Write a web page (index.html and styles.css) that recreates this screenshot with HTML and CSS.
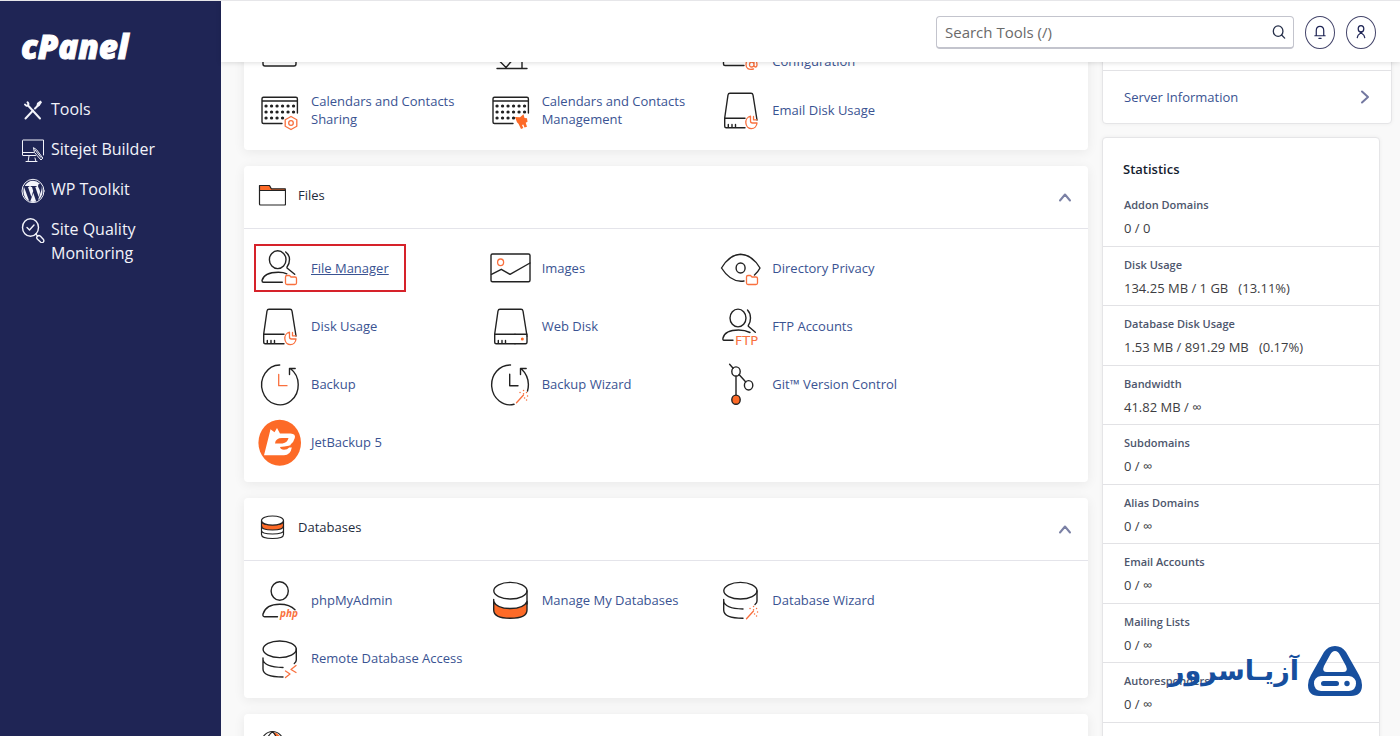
FILE: index.html
```html
<!DOCTYPE html>
<html lang="en">
<head>
<meta charset="utf-8">
<meta name="viewport" content="width=device-width, initial-scale=1">
<title>cPanel - Tools</title>
<link rel="stylesheet" href="styles.css">
</head>
<body>
<svg class="defs" width="0" height="0" aria-hidden="true">
  <defs>
    <g id="folder-badge"><path class="o" d="M28.500 39V33q0-1.500 1.500-1.500h2.500l1.500 1.500h4q1.500 0 1.500 1.500V39q0 1.500-1.500 1.500H30q-1.500 0-1.500-1.500z"/></g>
    <g id="pie-badge"><path class="o" d="M32.500 30.200A5.600 6.300 0 1 0 39 37h-4.500q-2 0-2-2z M35.500 30.500v3.300h3.300"/></g>
    <g id="wand-badge"><path class="o" d="M28.500 42.700l7-7.700"/><path class="o dots" d="M32 32.500h.1M35.500 30.500h.1M38.500 32.500h.1M35.500 33.700h.1M39.500 36h.1M36.500 38h.1M38.500 40h.1"/></g>
    <g id="drive"><path d="M27 41.700H8.200q-1.500 0-1.500-1.500V32L10 9q.3-1.700 2-1.700h21q1.700 0 2 1.700l4 25M6.700 32.300H27M10.300 38.500v3M14 38.500v3M17.500 38.500v3"/></g>
    <g id="calendar"><path d="M25 37.500H6.500q-1.500 0-1.500-1.500V12.800q0-1.500 1.500-1.500h32.400q1.500 0 1.500 1.500V27M5 15h35.400"/><path class="cal" d="M9 20h.1M14.500 20h.1M20 20h.1M25.500 20h.1M31 20h.1M36.500 20h.1M9 26h.1M14.500 26h.1M20 26h.1M25.500 26h.1M31 26h.1M36.500 26h.1M9 32h.1M14.500 32h.1M20 32h.1M25.500 32h.1"/></g>
  </defs>
</svg>
<div class="app">
  <aside class="sidebar">
    <a class="brand" href="#">cPanel</a>
    <nav class="nav" aria-label="Main">
      <a href="#"><svg viewBox="0 0 24 26" aria-hidden="true"><path class="thick" d="M4.500 21.500L12 13.500M14 11.500L17.500 8"/><path class="thick" d="M6.500 5.300Q8 6.500 7 8.200 5.500 9.500 4 7.500M7.500 9l11.500 12.500"/><path class="solid" d="M15.500 8.500l.5-2.500 3.500-2.500 1.500 1.800-2.500 3.700-2 .8z"/></svg><span>Tools</span></a>
      <a href="#"><svg viewBox="0 0 24 26" aria-hidden="true"><path d="M14.500 18.500H2q-.5 0-.5-.5V3.500q0-.5.500-.5h20.500v15M1.500 15.500h11M8 19l-.8 5M14 21l.8 3M5 24.500h11"/><path class="thick" d="M12.500 11l1 4.500 6.500 7.500 1.800-2-6-8zM14 13l6 7.500"/></svg><span>Sitejet Builder</span></a>
      <a href="#"><svg viewBox="0 0 24 26" aria-hidden="true"><ellipse cx="12" cy="14" rx="11" ry="11.700"/><path class="solid" d="M3 10L8.200 24Q3 22 2.400 15 2.300 12 3 10z"/><path class="solid" d="M4 8.500Q7 3.700 12 3.700q4 0 7 3-2 0-2 2.200c0 2 2 3 2 5.600 0 1.500-.7 3-1.300 5.500L14.300 10l1.300-.2V9h-6v.8l1.400.2 1.200 4-1.800 6L7 10l1.400-.2V9H4z"/><path class="solid" d="M12.300 16l2.900 8.500q-3 .8-6 .1zM20.700 9q1.200 3 .7 7-.8 4.600-4.400 7l3.300-9.500Q21 11 20.700 9z"/></svg><span>WP Toolkit</span></a>
      <a href="#"><svg viewBox="0 0 24 26" aria-hidden="true"><ellipse cx="9.500" cy="10.500" rx="8" ry="8.700"/><path class="thick" d="M6 10.500l2.500 2.500 4.500-5"/><path d="M14.800 17l2 2.200M16 19.500q-.8 1.500.5 2.800l3.300 3q1.500 1 2.500-.2t.2-2.600l-3-3.200q-1.500-1.300-2.700-.2z"/></svg><span>Site Quality<br>Monitoring</span></a>
    </nav>
  </aside>

  <div class="page">
    <header class="topbar">
      <div class="search">
        <input type="search" aria-label="Search Tools" placeholder="Search Tools (/)">
        <button type="button" aria-label="Search"><svg viewBox="0 0 16 18" aria-hidden="true"><ellipse cx="7" cy="8" rx="5.500" ry="6"/><path d="M11 12.500l3.500 3.500"/></svg></button>
      </div>
      <button class="round" type="button" aria-label="Notifications"><svg viewBox="0 0 30 33" aria-hidden="true"><path d="M9.500 20h11M11 20v-5.500Q11 10 15 10t4 4.500V20M13.800 22.700h2.400"/></svg></button>
      <button class="round" type="button" aria-label="User account"><svg viewBox="0 0 30 33" aria-hidden="true"><ellipse cx="15" cy="12.500" rx="3" ry="3.400"/><path d="M11 22q.3-3 3-4.500l3-2.200M19 22q-.3-3-3-4.500l-3-2.200"/></svg></button>
    </header>

    <div class="content">
      <main class="tools">
        <section class="card" aria-label="Email">
          <div class="grid">
            <a class="tool" href="#" aria-label="Email tool"><svg viewBox="0 0 44 48" aria-hidden="true"><path d="M6 25v11q0 2 2 2h29q2 0 2-2V25"/></svg></a>
            <a class="tool" href="#" aria-label="Email filter"><svg viewBox="0 0 44 48" aria-hidden="true"><path d="M9 40.500h30M11 32.500l7 7 6-7M34 30v10"/></svg></a>
            <a class="tool" href="#"><svg viewBox="0 0 44 48" aria-hidden="true"><path d="M26 37.500H7q-1.500 0-1.500-1.500V26"/><path class="o" d="M35.500 41Q28 42.500 28 36.500q0-5.500 5.500-5.500t5.500 5.500q0 2.500-1.500 2.500T36 37v-3M36 36.500q0 2.500-2.300 2.500T31.500 36.500 33.700 34 36 36.500"/></svg><span class="second-line">Configuration</span></a>
            <a class="tool" href="#"><svg viewBox="0 0 44 48" aria-hidden="true"><use href="#calendar"/><path class="o" d="M34 30.500l5.800 3.200v6.600L34 43.500l-5.800-3.200v-6.600z"/><circle class="o" cx="34" cy="37" r="2.300"/></svg><span>Calendars and Contacts<br>Sharing</span></a>
            <a class="tool" href="#"><svg viewBox="0 0 44 48" aria-hidden="true"><use href="#calendar"/><path class="of" d="M27 31l5 .3 3.500-3 1 3.700 2.500.2.500 3.500-1.800 1 1.300 4-2.500.8-1.200-3-1.300.6 1.300 2.800-2.300 1-2.500-5.200-1.500-1.500z"/></svg><span>Calendars and Contacts<br>Management</span></a>
            <a class="tool" href="#"><svg viewBox="0 0 44 48" aria-hidden="true"><use href="#drive"/><use href="#pie-badge"/></svg><span>Email Disk Usage</span></a>
          </div>
        </section>

        <section class="card">
          <h2 class="head"><svg class="head-icon" viewBox="0 0 28 26" aria-hidden="true"><path class="of line" d="M1.500 8V3.500h10l1.800 3.300h14V8.500H1.500z"/><path d="M1.500 8.500V22q0 1 1 1h24q1 0 1-1V8.500z"/></svg><span>Files</span><button type="button" aria-label="Collapse Files"><svg viewBox="0 0 14 12" aria-hidden="true"><path d="M2 9.500l5-6 5 6"/></svg></button></h2>
          <div class="grid">
            <a class="tool current" href="#"><svg viewBox="0 0 44 48" aria-hidden="true"><ellipse cx="20.700" cy="15.700" rx="8.300" ry="8.900"/><path d="M28.700 8q3.800 3 3.800 7.500 0 4.500-2.500 7.500v1l7.700 6.300M25.300 38.300H6.500Q5 38.300 5 36.500q2-8.200 16.300-8.200 5.500 0 8.500 1.500"/><use href="#folder-badge"/></svg><span>File Manager</span></a>
            <a class="tool" href="#"><svg viewBox="0 0 44 48" aria-hidden="true"><rect x="3" y="10" width="39" height="27.700" rx="1.500"/><path d="M3.500 30.300l9.800-5 8.700 5L42 19"/><ellipse class="o" cx="12.600" cy="18.300" rx="3" ry="3.300"/></svg><span>Images</span></a>
            <a class="tool" href="#"><svg viewBox="0 0 44 48" aria-hidden="true"><path d="M26 37Q13 39 3.500 24q8-13.500 19-13.700Q34 10.500 42 24q-2 4-5.500 7"/><ellipse cx="22.600" cy="24" rx="4.500" ry="5"/><use href="#folder-badge"/></svg><span>Directory Privacy</span></a>
            <a class="tool" href="#"><svg viewBox="0 0 44 48" aria-hidden="true"><use href="#drive"/><use href="#pie-badge"/></svg><span>Disk Usage</span></a>
            <a class="tool" href="#"><svg viewBox="0 0 44 48" aria-hidden="true"><use href="#drive"/><path d="M27 32.300h12M27 41.700h10.500q1.500 0 1.500-1.500V34"/><circle class="of" cx="34.300" cy="37" r="1.500"/></svg><span>Web Disk</span></a>
            <a class="tool" href="#"><svg viewBox="0 0 44 48" aria-hidden="true"><ellipse cx="20" cy="16" rx="8" ry="8.900"/><path d="M29.500 8q3 3 3 8 0 4.500-2.200 7.500v.8l7 6M15 38.300H6Q4.500 38.300 5 36q2-8 15.500-8 6.500 0 11.500 2.500"/><text class="ftp" x="17" y="43">FTP</text></svg><span>FTP Accounts</span></a>
            <a class="tool" href="#"><svg viewBox="0 0 44 48" aria-hidden="true"><path d="M22.700 5A18.300 19.900 0 1 0 33.300 8.500M32.500 14.500V8.500h5.700"/><path class="o" d="M21.700 14.300v11.400H30"/></svg><span>Backup</span></a>
            <a class="tool" href="#"><svg viewBox="0 0 44 48" aria-hidden="true"><path d="M22.500 5A18.300 19.900 0 1 0 26 44.300M39.500 31Q43 18 33 8.500M32.500 14.500V8.500h5.700M21.700 14.300v11.400H30"/><use href="#wand-badge"/></svg><span>Backup Wizard</span></a>
            <a class="tool" href="#"><svg viewBox="0 0 44 48" aria-hidden="true"><path d="M11.600 4.300l3.500 4M18 16v19M21 14.500l6.800 7.500"/><ellipse cx="18" cy="11.500" rx="4.200" ry="4.600"/><ellipse cx="30.600" cy="25.300" rx="4.200" ry="4.700"/><ellipse class="of line" cx="18" cy="39.700" rx="4.200" ry="4.600"/></svg><span>Git™ Version Control</span></a>
            <a class="tool" href="#"><svg viewBox="0 0 44 48" aria-hidden="true"><ellipse class="of" cx="22.700" cy="24.800" rx="21.300" ry="23"/><path class="wf" d="M7 37.300l4.500-17.800 2-8.200 4 3L20 10l3 5.500h10.500q5.500.3 4.300 4.500-1 4-4.300 6.500l1.500 2.200q-1.500 8.600-8 8.600z"/><path class="of" d="M18 25.500q.5-5.500 7-5.500h6.500q-1 4.500-6 5.500zM40 24.500q-8 4-17 4.500.5 2.800 4 2.800 3.500 0 5.200-2.300H38z"/></svg><span>JetBackup 5</span></a>
          </div>
        </section>

        <section class="card">
          <h2 class="head"><svg class="head-icon" viewBox="0 0 28 26" aria-hidden="true"><path class="of line" d="M3.500 7q0 4 11 4t11-4v5q0 4-11 4t-11-4z"/><ellipse class="wf line" cx="14.500" cy="6.500" rx="11" ry="4.500"/><path d="M3.500 12v8.500q0 4 11 4t11-4V12M3.500 16.500q0 3.500 11 3.500t11-3.500"/></svg><span>Databases</span><button type="button" aria-label="Collapse Databases"><svg viewBox="0 0 14 12" aria-hidden="true"><path d="M2 9.500l5-6 5 6"/></svg></button></h2>
          <div class="grid">
            <a class="tool" href="#"><svg viewBox="0 0 44 48" aria-hidden="true"><ellipse cx="22.700" cy="15" rx="8.600" ry="9.300"/><path d="M20.500 40.700H7.500Q5.500 40.700 6 38q3-9.700 16.700-9.700 10 0 15.300 5.500"/><text class="php" x="23" y="41">php</text></svg><span>phpMyAdmin</span></a>
            <a class="tool" href="#"><svg viewBox="0 0 44 48" aria-hidden="true"><path class="of line" d="M5.700 25.500q3 7 16.700 7T39 25.500V34q0 8.300-16.600 8.300T5.700 34z"/><ellipse cx="22.400" cy="14.700" rx="16.600" ry="8.300"/><path d="M39 15v13M5.700 23.500V28"/></svg><span>Manage My Databases</span></a>
            <a class="tool" href="#"><svg viewBox="0 0 44 48" aria-hidden="true"><ellipse cx="22.400" cy="14.700" rx="16.600" ry="8.300"/><path d="M39 15v10q0 2-2 3.500M5.700 23.500V34q0 8.300 19.300 8.300M5.700 25q1 7.500 19.300 8"/><use href="#wand-badge"/></svg><span>Database Wizard</span></a>
            <a class="tool" href="#"><svg viewBox="0 0 44 48" aria-hidden="true"><ellipse cx="22.700" cy="15.300" rx="16.600" ry="8.300"/><path d="M39.300 15v11q0 2-2 3.500M6 24v11q0 8 20 8M6 25.500q1 7.500 20 8"/><path class="o" d="M28.500 37l4.500 3-4.500 3.500M39 31.500l-5 4 5 3"/></svg><span>Remote Database Access</span></a>
          </div>
        </section>

        <section class="card" aria-label="Domains">
          <h2 class="head"><svg class="head-icon" viewBox="0 0 28 26" aria-hidden="true"><path class="of" d="M14.500 2q7 1 9.500 8h-6q-1-6-3.500-8z"/><ellipse cx="14.500" cy="13" rx="11" ry="11.500"/><path d="M10 20Q6 8 14.500 1.700 20 6 20 20M4 9h21"/></svg></h2>
        </section>
      </main>

      <aside class="side">
        <section class="panel info">
          <div class="spacer"></div>
          <a href="#"><span>Server Information</span><svg viewBox="0 0 10 16" aria-hidden="true"><path d="M2 2.500L8 8l-6 5.500"/></svg></a>
        </section>
        <section class="panel stats">
          <h2>Statistics</h2>
          <dl>
            <div><dt>Addon Domains</dt><dd>0 / 0</dd></div>
            <div><dt>Disk Usage</dt><dd>134.25 MB / 1 GB &nbsp; (13.11%)</dd></div>
            <div><dt>Database Disk Usage</dt><dd>1.53 MB / 891.29 MB &nbsp; (0.17%)</dd></div>
            <div><dt>Bandwidth</dt><dd>41.82 MB / ∞</dd></div>
            <div><dt>Subdomains</dt><dd>0 / ∞</dd></div>
            <div><dt>Alias Domains</dt><dd>0 / ∞</dd></div>
            <div><dt>Email Accounts</dt><dd>0 / ∞</dd></div>
            <div><dt>Mailing Lists</dt><dd>0 / ∞</dd></div>
            <div><dt>Autoresponders</dt><dd>0 / ∞</dd></div>
            <div><dt>Forwarders</dt><dd>0 / ∞</dd></div>
          </dl>
        </section>
      </aside>
    </div>
  </div>

  <div class="watermark">
    <span lang="fa" dir="rtl">آزیـاسرور</span>
    <svg viewBox="0 0 54 50" aria-hidden="true"><path fill-rule="evenodd" d="M27 0q7 0 11 6l13 23q3 5 3 10 0 11-11 11H11Q0 50 0 39q0-5 3-10L16 6Q20 0 27 0zM27 5q-3 0-5 4l-6 11q-2.500 6 3 6h16q5.500 0 3-6L32 9q-2-4-5-4zM13 30q-7 1-7 7.500T13 45h28q7-1 7-7.500T41 30z"/><path d="M15.500 35h13q2.500 0 2.500 2.500T28.500 40h-13q-2.500 0-2.500-2.500t2.500-2.500z"/><circle cx="39" cy="37.500" r="2.700"/></svg>
  </div>
</div>
</body>
</html>
```
FILE: styles.css
```css
*, *::before { box-sizing: border-box; }
body {
  margin: 0;
  font-family: "Open Sans", "Noto Sans", sans-serif;
  font-size: 13px;
  line-height: 18px;
  color: #333;
  background: #f9f9f9;
}
a { color: inherit; text-decoration: none; }
button { padding: 0; border: 0; background: none; color: inherit; cursor: pointer; }
h2, dl, dd { margin: 0; }
svg { display: block; fill: none; stroke: currentColor; stroke-linecap: round; stroke-linejoin: round; }
.defs { position: absolute; }

.app {
  display: flex;
  height: 100vh;
  overflow: hidden;
  border-top: 1px solid #e6e6e9;
}

.sidebar {
  flex: 0 0 221px;
  padding: 24px 20px;
  background: #1f2555;
  color: #fff;
}
.brand {
  display: block;
  padding-left: 1px;
  font-size: 33px;
  line-height: 44px;
  font-weight: 800;
  font-style: italic;
  -webkit-text-stroke: 1px #fff;
}
.nav {
  display: flex;
  flex-direction: column;
  gap: 14px;
  margin-top: 28px;
  font-size: 16px;
  line-height: 24px;
  color: #f2f3fa;
}
.nav a { display: flex; gap: 6px; padding-left: 1px; }
.nav svg { flex: none; width: 24px; height: 26px; stroke-width: 1; }
.nav .thick { stroke-width: 2; }
.nav a:nth-child(2) .thick { stroke-width: 1; }
.nav a:nth-child(4) svg, .nav a:nth-child(4) .thick { stroke-width: 1.400; }
.nav .solid { fill: currentColor; stroke: none; }

.page { flex: 1; min-width: 0; display: flex; flex-direction: column; }
.topbar {
  position: relative;
  z-index: 2;
  flex: none;
  display: flex;
  justify-content: flex-end;
  align-items: center;
  gap: 11px;
  height: 61px;
  padding: 2px 24px 0 0;
  background: #fff;
  box-shadow: 0 1px 5px rgba(0, 0, 0, 0.13);
}
.search {
  display: flex;
  align-items: center;
  width: 358px;
  height: 33px;
  padding: 0 7px 0 8px;
  border: 1px solid #c3c4cd;
  border-bottom-width: 2px;
  border-radius: 4px;
}
.search input {
  flex: 1;
  min-width: 0;
  padding: 0;
  border: 0;
  outline: 0;
  font: inherit;
  font-size: 15px;
  background: none;
}
.search input::placeholder { color: #6a6a6a; opacity: 1; }
.search svg { width: 14px; height: 16px; color: #26304a; stroke-width: 1.500; }
.round {
  width: 30px;
  height: 33px;
  border: 1px solid #45466b;
  border-radius: 50%;
  color: #1f2555;
}
.round svg { width: 100%; height: 100%; stroke-width: 1.300; }

.content {
  display: flex;
  align-items: flex-start;
  gap: 14px;
  margin-top: -49px;
  padding: 0 8px 0 23px;
}
.tools { flex: 1; min-width: 0; display: flex; flex-direction: column; gap: 16px; }
.card {
  background: #fff;
  border-radius: 4px;
  box-shadow: 0 2px 12px rgba(0, 0, 0, 0.07);
}
.head {
  display: flex;
  align-items: center;
  gap: 12px;
  height: 62px;
  padding: 0 16px 4px 14px;
  font-size: 13px;
  font-weight: 400;
  color: #1e2b3c;
}
.head + .grid { border-top: 1px solid #e4e4ea; }
.head button { margin-left: auto; padding-top: 4px; color: #7b81a5; }
.head button svg { width: 14px; height: 12px; stroke-width: 2; }
.head-icon { width: 28px; height: 26px; color: #222; stroke-width: 1.200; }

.grid {
  display: grid;
  grid-template-columns: repeat(3, 28.2%);
  grid-auto-rows: 58px;
  padding: 10px 13px 11px;
}
.tool {
  display: flex;
  align-items: center;
  gap: 10px;
  color: #3a5392;
}
.tool svg { flex: none; width: 44px; height: 48px; color: #222; stroke-width: 1.400; }
.second-line { padding-top: 18px; }
.current { position: relative; }
.current span { text-decoration: underline; }
.current::before {
  content: "";
  position: absolute;
  top: 5px;
  bottom: 5px;
  left: -3px;
  width: 152px;
  border: 2px solid #d6222a;
}
.o { stroke: #f9703e; stroke-width: 1.300; }
.of { fill: #fd6a27; stroke: none; }
.wf { fill: #fff; stroke: none; }
.line { stroke: currentColor; }
.dots { stroke-width: 1.400; }
.cal { stroke-width: 3.200; }
.ftp { font-family: "DejaVu Sans", sans-serif; font-size: 13px; fill: #f9703e; stroke: none; }
.php { font-size: 10px; font-weight: 700; font-style: italic; fill: #f9703e; stroke: none; }

.side { flex: 0 0 290px; display: flex; flex-direction: column; gap: 13px; }
.panel {
  background: #fff;
  border: 1px solid #e5e5e7;
  border-radius: 4px;
  box-shadow: 0 0 4px rgba(0, 0, 0, 0.05);
}
.spacer { height: 57px; border-bottom: 1px solid #e2e2e5; }
.info a {
  display: flex;
  align-items: center;
  justify-content: space-between;
  height: 52px;
  padding: 0 21px;
  color: #3a5392;
}
.info svg { width: 10px; height: 16px; color: #7378a0; stroke-width: 2; }
.stats { margin-right: 12px; }
.stats h2 {
  padding: 22px 20px 9px;
  font-size: 13px;
  line-height: 18px;
  font-weight: 600;
  color: #14202e;
}
.stats dl > div { height: 60px; padding: 8px 21px 0; border-bottom: 1px solid #e2e2e5; }
.stats dl > div:nth-child(even) { height: 59px; }
.stats dt { font-size: 11px; line-height: 20px; font-weight: 600; color: #4d566c; }
.stats dd { padding-top: 3px; line-height: 20px; color: #3d3d42; }

.watermark {
  position: absolute;
  right: 38px;
  bottom: 40px;
  z-index: 3;
  display: flex;
  align-items: center;
  gap: 9px;
  color: #174f9e;
}
.watermark span { font: 700 27px/50px "DejaVu Sans", sans-serif; }
.watermark svg { width: 54px; height: 50px; fill: currentColor; stroke: none; }
```
